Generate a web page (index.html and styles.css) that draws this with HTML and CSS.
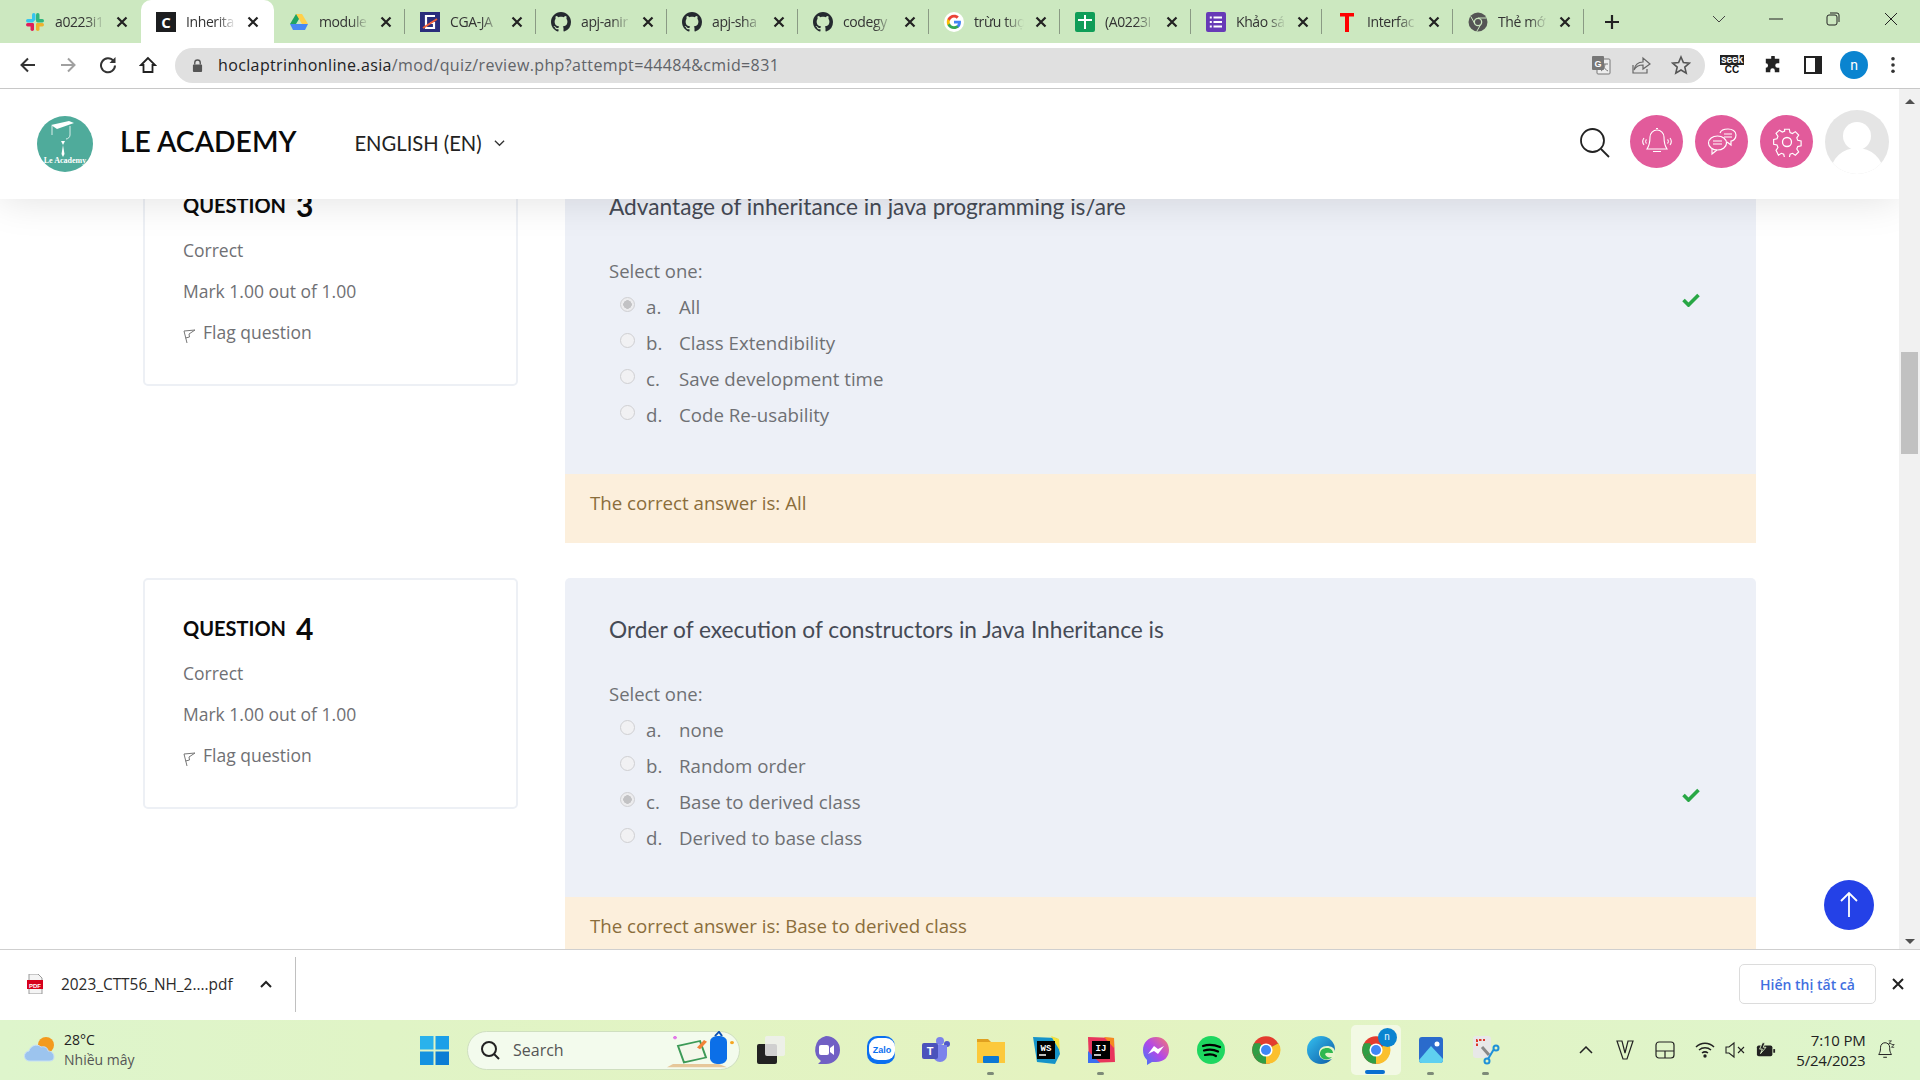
FILE: index.html
```html
<!DOCTYPE html>
<html lang="en">
<head>
<meta charset="utf-8">
<title>LE ACADEMY</title>
<link rel="stylesheet" href="styles.css">
</head>
<body>
<svg class="sprite" aria-hidden="true">
  <symbol id="gh" viewBox="0 0 16 16"><path fill="#24292f" d="M8 0C3.58 0 0 3.58 0 8c0 3.54 2.29 6.53 5.47 7.59.4.07.55-.17.55-.38 0-.19-.01-.82-.01-1.49-2.01.37-2.53-.49-2.69-.94-.09-.23-.48-.94-.82-1.13-.28-.15-.68-.52-.01-.53.63-.01 1.08.58 1.23.82.72 1.21 1.87.87 2.33.66.07-.52.28-.87.51-1.07-1.78-.2-3.64-.89-3.64-3.95 0-.87.31-1.59.82-2.15-.08-.2-.36-1.02.08-2.12 0 0 .67-.21 2.2.82.64-.18 1.32-.27 2-.27.68 0 1.36.09 2 .27 1.53-1.04 2.2-.82 2.2-.82.44 1.1.16 1.92.08 2.12.51.56.82 1.27.82 2.15 0 3.07-1.87 3.75-3.65 3.95.29.25.54.73.54 1.48 0 1.07-.01 1.93-.01 2.2 0 .21.15.46.55.38A8.013 8.013 0 0016 8c0-4.42-3.58-8-8-8z"/></symbol>
  <symbol id="close" viewBox="0 0 12 12"><path d="M1.500 1.500l9 9M10.500 1.500l-9 9" stroke="#222" stroke-width="2.200" fill="none"/></symbol>
  <symbol id="flag" viewBox="0 0 14 16"><path d="M4 15L1 3l11-1-6 4 .5 3-4 1" fill="none" stroke="#777" stroke-width="1"/></symbol>
  <symbol id="check" viewBox="0 0 18 14"><path d="M1.500 7l5 5L16.500 2" fill="none" stroke="#28a745" stroke-width="3.600"/></symbol>
  <symbol id="chrome" viewBox="0 0 48 48"><circle cx="24" cy="24" r="22" fill="#e33b2e"/><path d="M24 24L5 35A22 22 0 0 1 5 13L14 13z" fill="#2f9e44"/><path d="M24 24L5 35A22 22 0 0 0 24 46L44 13z" fill="#2f9e44"/><path d="M24 24L44 13A22 22 0 0 1 24 46z" fill="#fbc02d"/><circle cx="24" cy="24" r="10.500" fill="#fff"/><circle cx="24" cy="24" r="8" fill="#3f86f5"/></symbol>
</svg>

<div class="tabstrip">
  <div class="tab nosep">
    <svg class="fav" viewBox="0 0 20 20"><rect x="7" y="1" width="3.500" height="8" rx="1.700" fill="#36c5f0"/><rect x="1" y="7" width="8" height="3.500" rx="1.700" fill="#36c5f0" /><rect x="11" y="1" width="3.500" height="8" rx="1.700" fill="#2eb67d"/><rect x="11" y="7" width="8" height="3.500" rx="1.700" fill="#2eb67d"/><rect x="1" y="11" width="8" height="3.500" rx="1.700" fill="#e01e5a"/><rect x="5.500" y="11" width="3.500" height="8" rx="1.700" fill="#e01e5a"/><rect x="11" y="11" width="8" height="3.500" rx="1.700" fill="#ecb22e"/><rect x="11" y="11" width="3.500" height="8" rx="1.700" fill="#ecb22e"/></svg>
    <span class="tab-t">a0223i1</span><svg class="x"><use href="#close"/></svg>
  </div>
  <div class="tab active nosep">
    <svg class="fav" viewBox="0 0 20 20"><rect width="20" height="20" fill="#1c1d1f"/><text x="10" y="15.500" text-anchor="middle" class="fav-c">C</text></svg>
    <span class="tab-t">Inherita</span><svg class="x"><use href="#close"/></svg>
  </div>
  <div class="tab">
    <svg class="fav" viewBox="0 0 20 18"><path d="M7 1h6L7 11H1z" fill="#1fa463"/><path d="M13 1l6 10h-6L7 1z" fill="#ffd04b"/><path d="M1 11l3 6h12l3-6z" fill="#4688f4"/></svg>
    <span class="tab-t">module</span><svg class="x"><use href="#close"/></svg>
  </div>
  <div class="tab">
    <svg class="fav" viewBox="0 0 20 20"><rect width="20" height="20" fill="#2a2d7c"/><path d="M15 4H6v12h8v-5h-4" fill="none" stroke="#fff" stroke-width="2.200"/><path d="M3 16L17 7" stroke="#f0603a" stroke-width="2"/></svg>
    <span class="tab-t">CGA-JA</span><svg class="x"><use href="#close"/></svg>
  </div>
  <div class="tab"><svg class="fav"><use href="#gh"/></svg><span class="tab-t">apj-anir</span><svg class="x"><use href="#close"/></svg></div>
  <div class="tab"><svg class="fav"><use href="#gh"/></svg><span class="tab-t">apj-sha</span><svg class="x"><use href="#close"/></svg></div>
  <div class="tab"><svg class="fav"><use href="#gh"/></svg><span class="tab-t">codegy</span><svg class="x"><use href="#close"/></svg></div>
  <div class="tab">
    <svg class="fav" viewBox="0 0 48 48"><circle cx="24" cy="24" r="24" fill="#fff"/><path fill="#4285f4" d="M40.700 24.400c0-1.200-.1-2.300-.3-3.400H24v6.500h9.400c-.4 2.200-1.600 4-3.500 5.200v4.300h5.600c3.300-3 5.200-7.500 5.200-12.600z"/><path fill="#34a853" d="M24 41c4.700 0 8.600-1.600 11.500-4.200l-5.600-4.300c-1.600 1-3.600 1.700-5.900 1.700-4.500 0-8.400-3.100-9.800-7.200H8.400v4.500C11.200 36.200 17.100 41 24 41z"/><path fill="#fbbc05" d="M14.200 27c-.4-1-.6-2.100-.6-3.200s.2-2.200.6-3.200v-4.500H8.400C7.200 18.400 6.600 21 6.600 23.800s.6 5.300 1.800 7.700z"/><path fill="#ea4335" d="M24 13.300c2.500 0 4.800.9 6.600 2.600l4.900-4.900C32.600 8.200 28.700 6.600 24 6.600c-6.900 0-12.800 4.800-15.600 9.900l5.800 4.500c1.400-4.600 5.300-7.700 9.800-7.700z"/></svg>
    <span class="tab-t">trừu tuợ</span><svg class="x"><use href="#close"/></svg>
  </div>
  <div class="tab">
    <svg class="fav" viewBox="0 0 20 20"><rect width="20" height="20" rx="2" fill="#0f9d58"/><path d="M10 3v14M3 8h14" stroke="#fff" stroke-width="2"/></svg>
    <span class="tab-t">(A0223I</span><svg class="x"><use href="#close"/></svg>
  </div>
  <div class="tab">
    <svg class="fav" viewBox="0 0 20 20"><rect width="20" height="20" rx="2" fill="#673ab7"/><path d="M7.500 5.500H16M7.500 10H16M7.500 14.500H16M3.800 5.500h2M3.800 10h2M3.800 14.500h2" stroke="#fff" stroke-width="2"/></svg>
    <span class="tab-t">Khảo sá</span><svg class="x"><use href="#close"/></svg>
  </div>
  <div class="tab">
    <svg class="fav" viewBox="0 0 20 20"><path d="M3 1h14v3.500h-5V20H8V4.500H3z" fill="#f00"/></svg>
    <span class="tab-t">Interfac</span><svg class="x"><use href="#close"/></svg>
  </div>
  <div class="tab">
    <svg class="fav" viewBox="0 0 20 20"><circle cx="10" cy="10" r="9.500" fill="#555"/><path d="M10 6h8.500M7 12L2.800 4.500M13 12l-4.300 7.500" stroke="#cce8c0" stroke-width="1"/><circle cx="10" cy="10" r="4.300" fill="#cce8c0"/><circle cx="10" cy="10" r="3" fill="#555"/></svg>
    <span class="tab-t">Thẻ mớ</span><svg class="x"><use href="#close"/></svg>
  </div>
  <svg class="newtab" viewBox="0 0 16 16"><path d="M8 1v14M1 8h14" stroke="#222" stroke-width="2.200"/></svg>
  <div class="winctl">
    <svg class="wc wc-chev" viewBox="0 0 14 8"><path d="M1 1l6 6 6-6" fill="none" stroke="#444"/></svg>
    <svg class="wc wc-min" viewBox="0 0 14 14"><path d="M0 7h14" stroke="#222"/></svg>
    <svg class="wc wc-max" viewBox="0 0 14 14"><rect x="1" y="3" width="10" height="10" rx="2" fill="none" stroke="#222"/><path d="M4 1h7a2 2 0 0 1 2 2v7" fill="none" stroke="#222"/></svg>
    <svg class="wc wc-close" viewBox="0 0 14 14"><path d="M1 1l12 12M13 1L1 13" stroke="#222"/></svg>
  </div>
</div>

<div class="toolbar">
  <svg class="tb" viewBox="0 0 18 18"><path d="M16 9H3M9 2.500L2.500 9 9 15.500" fill="none" stroke="#333" stroke-width="2"/></svg>
  <svg class="tb" viewBox="0 0 18 18"><path d="M2 9h13M9 2.500L15.500 9 9 15.500" fill="none" stroke="#a0a0a0" stroke-width="2"/></svg>
  <svg class="tb" viewBox="0 0 18 18"><path d="M14.500 5A7 7 0 1 0 16 9.500" fill="none" stroke="#333" stroke-width="2"/><path d="M16.500 1v6h-6z" fill="#333"/></svg>
  <svg class="tb" viewBox="0 0 18 18"><path d="M9 2L2 9h2.500v7h9V9H16z" fill="none" stroke="#222" stroke-width="1.800"/></svg>
  <div class="omni">
    <svg class="lock" viewBox="0 0 12 16"><path d="M3 7V5a3 3 0 0 1 6 0v2" fill="none" stroke="#555" stroke-width="1.500"/><rect x="1" y="7" width="10" height="8" rx="1" fill="#555"/></svg>
    <span class="url"><span class="url-host">hoclaptrinhonline.asia</span>/mod/quiz/review.php?attempt=44484&amp;cmid=831</span>
    <svg class="omni-i" viewBox="0 0 20 20"><rect x="6" y="4" width="13" height="15" rx="1" fill="#eee" stroke="#777"/><rect x="1" y="1" width="12" height="14" rx="1" fill="#777"/><text x="7" y="12" text-anchor="middle" class="gt">G</text><path d="M11 9h6M14 9c0 3-2 6-4 7M12 11c1 2 3 4 5 5" fill="none" stroke="#777"/></svg>
    <svg class="omni-i" viewBox="0 0 20 20"><path d="M2 10v8h14v-4" fill="none" stroke="#666" stroke-width="1.200"/><path d="M3 15c1-6 5-8 9-8V3l7 6-7 5v-4c-4 0-7 1-9 5z" fill="none" stroke="#666" stroke-width="1.200"/></svg>
    <svg class="omni-i" viewBox="0 0 20 20"><path d="M10 2l2.400 5.600 6 .5-4.600 4 1.400 6L10 15l-5.200 3.100 1.400-6-4.600-4 6-.5z" fill="none" stroke="#555" stroke-width="1.600"/></svg>
  </div>
  <div class="seek"><span class="seek-a">seek</span><span class="seek-b">CC</span></div>
  <svg class="tb2" viewBox="0 0 20 20"><path d="M8 1a2 2 0 0 1 4 0v2h5v5h-2a2.500 2.500 0 0 0 0 5h2v5h-5v-2a2.500 2.500 0 0 0-5 0v2H2v-5a2.500 2.500 0 0 0 0-5V3h6z" fill="#222"/></svg>
  <svg class="tb2" viewBox="0 0 18 18"><rect x="1" y="1" width="16" height="16" fill="none" stroke="#222" stroke-width="2"/><rect x="11" y="1" width="6" height="16" fill="#222"/></svg>
  <span class="profile">n</span>
  <svg class="tb2 tb-dots" viewBox="0 0 6 20"><circle cx="3" cy="3" r="2" fill="#333"/><circle cx="3" cy="10" r="2" fill="#333"/><circle cx="3" cy="17" r="2" fill="#333"/></svg>
</div>

<div class="viewport">
  <div class="page">
    <header class="site-head">
      <svg class="logo" viewBox="0 0 56 56"><circle cx="28" cy="28" r="28" fill="#4fab9b"/><path d="M14 9l18-4 5 2-17 6z" fill="#fff"/><path d="M15 10v9M33 10v9c0 2-2 4-4 4" fill="none" stroke="#fff" stroke-width=".8"/><path d="M24 25l2 4 2-4zM26 29l-1.500 9 1.500 3 1.500-3z" fill="#fff"/><text x="28" y="47" text-anchor="middle" class="logo-t">Le Academy</text></svg>
      <div class="brand">LE ACADEMY</div>
      <div class="lang">ENGLISH (EN)<svg class="lang-c" viewBox="0 0 12 8"><path d="M1 1.500l5 5 5-5" fill="none" stroke="#333" stroke-width="1.400"/></svg></div>
      <div class="head-right">
        <svg class="h-search" viewBox="0 0 32 32"><circle cx="13.500" cy="13.500" r="11.500" fill="none" stroke="#222" stroke-width="1.800"/><path d="M22 22l8 8" stroke="#222" stroke-width="1.800"/></svg>
        <span class="pink"><svg viewBox="0 0 30 30"><path d="M15 3a7 7 0 0 0-7 7c0 6-1 9-3 12h20c-2-3-3-6-3-12a7 7 0 0 0-7-7zM11 24.500h8M14 1.500h2M2 11c-1.500 2-1.500 5 0 7M28 11c1.500 2 1.500 5 0 7M4.500 12.500c-1 1-1 3 0 4M25.500 12.500c1 1 1 3 0 4" fill="none" stroke="#fff" stroke-width="1.100"/></svg></span>
        <span class="pink"><svg viewBox="0 0 30 30"><path d="M13 6c1-3 4-4 8-4s8 2 8 6-3 6-5 6v4l-4-3" fill="none" stroke="#fff" stroke-width="1.200"/><ellipse cx="10.500" cy="16" rx="9" ry="7" fill="#e25b9b" stroke="#fff" stroke-width="1.200"/><path d="M5 22v5l5-4M6 14h9M6 17h9M17 7h8M17 10h8" fill="none" stroke="#fff" stroke-width="1.100"/></svg></span>
        <span class="pink"><svg viewBox="0 0 30 30"><circle cx="15" cy="15" r="4.500" fill="none" stroke="#fff" stroke-width="1.300"/><path d="M12.500 2h5l.8 3.500 2.500 1 3-2 3.500 3.500-2 3 1 2.500 3.500.8v5l-3.500.8-1 2.500 2 3-3.500 3.500-3-2-2.500 1-.8 3.500h-5l-.8-3.500-2.500-1-3 2L3.700 24l2-3-1-2.500L1.200 17.700v-5l3.500-.8 1-2.500-2-3L7.200 3l3 2 2.500-1z" fill="none" stroke="#fff" stroke-width="1.200" transform="translate(0.500 0.300) scale(.96)"/></svg></span>
        <svg class="avatar" viewBox="0 0 64 64"><defs><clipPath id="avc"><circle cx="32" cy="32" r="32"/></clipPath></defs><circle cx="32" cy="32" r="32" fill="#e5e5e5"/><g clip-path="url(#avc)"><circle cx="32" cy="26" r="14" fill="#fff"/><ellipse cx="32" cy="62" rx="26" ry="24" fill="#fff"/></g></svg>
      </div>
    </header>

    <section class="qrow">
      <aside class="qinfo">
        <h3 class="qno">Question <span class="qnum">3</span></h3>
        <div class="qmeta">Correct</div>
        <div class="qmeta">Mark 1.00 out of 1.00</div>
        <div class="qmeta qflag"><svg class="flag"><use href="#flag"/></svg>Flag question</div>
      </aside>
      <div class="qmain">
        <div class="formulation">
          <p class="qtext">Advantage of inheritance in java programming is/are</p>
          <p class="prompt">Select one:</p>
          <div class="opt"><span class="radio on"></span><span class="let">a.</span>All<svg class="tick"><use href="#check"/></svg></div>
          <div class="opt"><span class="radio"></span><span class="let">b.</span>Class Extendibility</div>
          <div class="opt"><span class="radio"></span><span class="let">c.</span>Save development time</div>
          <div class="opt"><span class="radio"></span><span class="let">d.</span>Code Re-usability</div>
        </div>
        <div class="feedback">The correct answer is: All</div>
      </div>
    </section>

    <section class="qrow">
      <aside class="qinfo">
        <h3 class="qno">Question <span class="qnum">4</span></h3>
        <div class="qmeta">Correct</div>
        <div class="qmeta">Mark 1.00 out of 1.00</div>
        <div class="qmeta qflag"><svg class="flag"><use href="#flag"/></svg>Flag question</div>
      </aside>
      <div class="qmain">
        <div class="formulation">
          <p class="qtext">Order of execution of constructors in Java Inheritance is</p>
          <p class="prompt">Select one:</p>
          <div class="opt"><span class="radio"></span><span class="let">a.</span>none</div>
          <div class="opt"><span class="radio"></span><span class="let">b.</span>Random order</div>
          <div class="opt"><span class="radio on"></span><span class="let">c.</span>Base to derived class<svg class="tick"><use href="#check"/></svg></div>
          <div class="opt"><span class="radio"></span><span class="let">d.</span>Derived to base class</div>
        </div>
        <div class="feedback">The correct answer is: Base to derived class</div>
      </div>
    </section>

    <span class="totop"><svg viewBox="0 0 20 28"><path d="M10 26V2M2 10l8-8 8 8" fill="none" stroke="#fff" stroke-width="1.800"/></svg></span>
  </div>
  <div class="scrollbar">
    <span class="sb-up"></span>
    <span class="sb-thumb"></span>
    <span class="sb-down"></span>
  </div>
</div>

<div class="downloads">
  <svg class="pdf" viewBox="0 0 16 20"><path d="M2 0h9l4 4v16H2z" fill="#f4f4f4" stroke="#999"/><rect y="6" width="16" height="9" fill="#d6001c"/><text x="8" y="13.500" text-anchor="middle" class="pdf-t">PDF</text></svg>
  <span class="dl-name">2023_CTT56_NH_2....pdf</span>
  <svg class="dl-chev" viewBox="0 0 12 8"><path d="M1 7l5-5 5 5" fill="none" stroke="#222" stroke-width="2"/></svg>
  <span class="dl-sep"></span>
  <button class="dl-all">Hiển thị tất cả</button>
  <svg class="dl-x" viewBox="0 0 12 12"><path d="M1 1l10 10M11 1L1 11" stroke="#222" stroke-width="2"/></svg>
</div>

<footer class="taskbar">
  <div class="weather">
    <svg class="w-ic" viewBox="0 0 32 28"><circle cx="22" cy="9" r="8" fill="#f39a1e"/><path d="M6 25a5 5 0 0 1-1-10c1-5 8-8 12-4 4-1 7 1 7 4 4 0 6 3 6 6s-2 4-5 4z" fill="#9cc4ee" stroke="#c6dff7"/></svg>
    <div class="w-t"><div class="w-a">28°C</div><div class="w-b">Nhiều mây</div></div>
  </div>
  <span class="start"><svg viewBox="0 0 29 29"><rect width="13.500" height="13.500" fill="#2ab2ec"/><rect x="15.500" width="13.500" height="13.500" fill="#1a9fe8"/><rect y="15.500" width="13.500" height="13.500" fill="#1492e0"/><rect x="15.500" y="15.500" width="13.500" height="13.500" fill="#0b7dd4"/></svg></span>
  <div class="search">
    <svg class="s-ic" viewBox="0 0 20 20"><circle cx="9" cy="9" r="7" fill="none" stroke="#222" stroke-width="2"/><path d="M14 14l5 5" stroke="#222" stroke-width="2"/></svg>
    <span class="s-t">Search</span>
    <svg class="s-art" viewBox="0 0 68 46" preserveAspectRatio="none"><path d="M6 8h4M8 6v4" stroke="#e27be8" stroke-width="2"/><path d="M0 44l6-4h46l8 4z" fill="#e6c79a"/><path d="M11 18l22-6 6 20-22 6z" fill="#f4f7ea" stroke="#3d9a57" stroke-width="2"/><path d="M30 20l7-9 3 2-7 9z" fill="#f2843a"/><rect x="43" y="6" width="17" height="34" rx="7" fill="#0b6fe8"/><path d="M48 6l4-5 3 5" fill="none" stroke="#0b4fb0" stroke-width="2"/><circle cx="65" cy="14" r="2" fill="#f5a623"/></svg>
  </div>
  <div class="apps">
    <span class="app"><svg viewBox="0 0 30 30"><rect x="1" y="9" width="20" height="20" rx="2" fill="#222"/><rect x="9" y="1" width="20" height="20" rx="2" fill="#eee" opacity=".85"/></svg></span>
    <span class="app"><svg viewBox="0 0 30 30"><path d="M15 1a14 14 0 0 1 0 28H7l3-3A14 14 0 0 1 15 1z" fill="#7160c4"/><rect x="8" y="10" width="10" height="10" rx="2" fill="#fff"/><path d="M19 13l4-3v10l-4-3z" fill="#fff"/></svg></span>
    <span class="app"><svg viewBox="0 0 30 30"><rect x="1" y="1" width="28" height="28" rx="10" fill="#0a6ff0"/><rect x="3" y="3" width="26" height="22" rx="9" fill="#fff"/><text x="16" y="18" text-anchor="middle" class="zalo">Zalo</text></svg></span>
    <span class="app"><svg viewBox="0 0 30 30"><circle cx="19" cy="6" r="4" fill="#7b83eb"/><circle cx="26" cy="9" r="3" fill="#5059c9"/><path d="M12 10h14v10a7 7 0 0 1-14 0z" fill="#7b83eb"/><rect x="1" y="8" width="16" height="16" rx="2" fill="#4b53bc"/><text x="9" y="20" text-anchor="middle" class="teams">T</text></svg></span>
    <span class="app has-dot"><svg viewBox="0 0 30 30"><path d="M1 4h11l3 3H1z" fill="#e0a020"/><rect x="1" y="7" width="28" height="21" fill="#fcc93c"/><rect x="7" y="21" width="16" height="7" rx="1" fill="#0c78d4"/></svg></span>
    <span class="app"><svg viewBox="0 0 30 30"><path d="M2 2l24 1 3 16-5 10-18-2z" fill="#1593c9"/><path d="M20 1l8 3 1 12z" fill="#f5e33c"/><rect x="6" y="6" width="18" height="18" fill="#000"/><text x="15" y="16" text-anchor="middle" class="jb">WS</text><path d="M8 20h7" stroke="#fff" stroke-width="1.500"/></svg></span>
    <span class="app has-dot"><svg viewBox="0 0 30 30"><path d="M2 2l26 1 1 24-26 1z" fill="#e8355c"/><path d="M18 2l10 1v10z" fill="#f58b1f"/><path d="M2 16v12h12z" fill="#3b6ef0"/><rect x="6" y="6" width="18" height="18" fill="#000"/><text x="15" y="16" text-anchor="middle" class="jb">IJ</text><path d="M8 20h7" stroke="#fff" stroke-width="1.500"/></svg></span>
    <span class="app"><svg viewBox="0 0 30 30"><defs><linearGradient id="msg" x1="0" y1="1" x2="1" y2="0"><stop offset="0" stop-color="#3b7bf6"/><stop offset=".5" stop-color="#b347e8"/><stop offset="1" stop-color="#f77a6c"/></linearGradient></defs><path d="M15 2c8 0 13 6 13 13s-5 12-13 12h-4l-5 3v-5C3 22 2 19 2 15 2 8 7 2 15 2z" fill="url(#msg)"/><path d="M7 19l6-8 4 3 6-3-6 8-4-3z" fill="#fff"/></svg></span>
    <span class="app"><svg viewBox="0 0 30 30"><circle cx="15" cy="15" r="14" fill="#1ed760"/><path d="M7 11c6-2 12-1 17 1M8 15.500c5-1.500 10-1 14 1M9 20c4-1 8-1 11 1" fill="none" stroke="#000" stroke-width="2.200" stroke-linecap="round"/></svg></span>
    <span class="app"><svg><use href="#chrome"/></svg></span>
    <span class="app"><svg viewBox="0 0 30 30"><defs><linearGradient id="edg" x1="0" y1="0" x2="1" y2="1"><stop offset="0" stop-color="#35c1f1"/><stop offset="1" stop-color="#0c59a4"/></linearGradient></defs><circle cx="15" cy="15" r="14" fill="url(#edg)"/><path d="M29 17c0-4-4-6-8-6-5 0-8 3-8 7 0 4 3 7 8 7 3 0 6-1 8-3z" fill="#e6f5cb"/><path d="M14 19c0-4 3-6 7-6 3 0 6 2 6 5-3 0-7-1-8 1 1 3 4 4 7 3-3 4-12 3-12-3z" fill="#2fb84f"/></svg></span>
    <span class="app active-app"><svg><use href="#chrome"/></svg><span class="ch-badge">n</span></span>
    <span class="app has-dot"><svg viewBox="0 0 30 30"><rect x="3" y="2" width="24" height="26" rx="3" fill="#2a6bcc"/><path d="M3 25l12-14 12 13v1a3 3 0 0 1-3 3H6a3 3 0 0 1-3-3z" fill="#5fd0f0"/><circle cx="21" cy="9" r="2.500" fill="#fff"/></svg></span>
    <span class="app has-dot"><svg viewBox="0 0 30 30"><rect x="2" y="1" width="18" height="22" rx="3" fill="#e8e8e8"/><path d="M6 11V5h8" fill="none" stroke="#e0382a" stroke-width="2" stroke-dasharray="2.500 1.500"/><path d="M11 12l7 8" stroke="#888" stroke-width="3"/><circle cx="25" cy="13" r="2.500" fill="none" stroke="#1e90d8" stroke-width="2"/><circle cx="16" cy="26" r="2.500" fill="none" stroke="#1e90d8" stroke-width="2"/><path d="M23 14l-6 10" stroke="#1e90d8" stroke-width="2"/></svg></span>
  </div>
  <div class="tray">
    <svg class="tr tr-caret" viewBox="0 0 14 8"><path d="M1 7l6-6 6 6" fill="none" stroke="#222" stroke-width="1.500"/></svg>
    <svg class="tr tr-v" viewBox="0 0 18 20"><path d="M1 1h5l3 12 3-12h5L11 19H7z" fill="none" stroke="#222" stroke-width="1.200"/></svg>
    <svg class="tr tr-t" viewBox="0 0 20 20"><rect x="1" y="2" width="18" height="16" rx="3" fill="none" stroke="#222" stroke-width="1.200"/><path d="M1 11h18M10 11v7" stroke="#222" stroke-width="1.200"/></svg>
    <svg class="tr tr-w" viewBox="0 0 20 18"><path d="M1 6c5-5 13-5 18 0M4 9c3.500-3 8.500-3 12 0M7 12c2-1.500 4-1.500 6 0" fill="none" stroke="#222" stroke-width="1.500"/><circle cx="10" cy="15" r="1.700" fill="#222"/></svg>
    <svg class="tr tr-s" viewBox="0 0 20 18"><path d="M1 6h3l5-4v14l-5-4H1z" fill="none" stroke="#222" stroke-width="1.100"/><path d="M13 6l6 6M19 6l-6 6" stroke="#222" stroke-width="1.100"/></svg>
    <svg class="tr tr-b" viewBox="0 0 22 18"><rect x="1" y="4" width="17" height="12" rx="2" fill="#222"/><rect x="19" y="8" width="2" height="4" fill="#222"/><path d="M7 1L4 8h3L5 13l6-7H8l2-5z" fill="#222" stroke="#e0f3cb"/></svg>
    <div class="clock"><div>7:10 PM</div><div>5/24/2023</div></div>
    <svg class="tr tr-n" viewBox="0 0 20 22"><path d="M9 3a5 5 0 0 0-5 5c0 5-1 6-2 8h14c-1-2-2-3-2-8a5 5 0 0 0-5-5zM7 19h4" fill="none" stroke="#222" stroke-width="1.100"/><path d="M13 1h3l-3 3h3M16 5h3l-3 3h3" fill="none" stroke="#222" stroke-width=".9"/></svg>
  </div>
</footer>
</body>
</html>
```

FILE: styles.css
```css
* { box-sizing: border-box; }
html, body { margin: 0; height: 100%; overflow: hidden; }
body {
  display: flex;
  flex-direction: column;
  height: 1080px;
  font-family: "Open Sans", "Noto Sans", sans-serif;
  background: #fff;
}
.sprite { display: block; width: 0; height: 0; }

/* tab strip */
.tabstrip {
  height: 43px;
  background: #cce8c0;
  display: flex;
  align-items: stretch;
  padding-left: 10px;
  flex: none;
}
.tab {
  width: 131px;
  display: flex;
  align-items: center;
  padding-left: 15px;
  position: relative;
}
.tab:not(.nosep)::after {
  content: "";
  width: 1px;
  height: 25px;
  background: #8a9a84;
  margin-left: 12px;
}
.tab.active {
  width: 133px;
  background: #fff;
  border-radius: 10px 10px 0 0;
}
.fav { width: 20px; height: 20px; flex: none; }
.tab-t {
  width: 50px;
  margin: -1px 0 0 10px;
  font: 14px "Open Sans", sans-serif;
  letter-spacing: -.4px;
  color: #333;
  white-space: nowrap;
  -webkit-mask-image: linear-gradient(90deg, #000 62%, transparent);
  mask-image: linear-gradient(90deg, #000 62%, transparent);
}
.x { width: 12px; height: 12px; margin-left: 11px; flex: none; }
.fav-c { font: 700 15px "Open Sans", sans-serif; fill: #fff; }
.newtab { width: 16px; height: 16px; align-self: center; margin-left: 20px; flex: none; }
.winctl { display: flex; align-items: center; margin-left: 92px; height: 38px; }
.wc { width: 14px; height: 14px; flex: none; }
.wc-chev { margin-right: 43px; }
.wc-min { margin-right: 43px; }
.wc-max { margin-right: 44px; }

/* toolbar */
.toolbar {
  height: 46px;
  flex: none;
  display: flex;
  align-items: center;
  border-bottom: 1px solid #c8c8c8;
  padding: 0 0 1px 19px;
}
.tb { width: 18px; height: 18px; flex: none; margin-right: 22px; }
.omni {
  width: 1530px;
  height: 35px;
  margin-left: -4px;
  border-radius: 18px;
  background: #e0e0e0;
  display: flex;
  align-items: center;
  padding-left: 17px;
  flex: none;
}
.lock { width: 11px; height: 15px; flex: none; }
.url {
  margin-left: 15px;
  font: 16px "Open Sans", sans-serif;
  letter-spacing: .37px;
  color: #5f6368;
  white-space: nowrap;
  flex: 1;
}
.url-host { color: #202124; }
.omni-i { width: 20px; height: 20px; flex: none; margin-right: 20px; }
.omni-i:last-child { margin-right: 14px; }
.gt { font: 700 9px "Liberation Sans", sans-serif; fill: #fff; }
.seek {
  width: 20px;
  margin-left: 17px;
  display: flex;
  flex-direction: column;
  align-items: center;
  flex: none;
  font-family: "Liberation Sans", sans-serif;
  font-weight: 700;
  line-height: 10px;
}
.seek-a { background: #222; color: #fff; font-size: 10px; padding: 0 1px; }
.seek-b { color: #111; font-size: 10px; }
.tb2 { height: 18px; width: 18px; flex: none; margin-left: 22px; }
.tb-dots { margin-left: 16px; }
.profile {
  width: 28px;
  height: 28px;
  margin-left: 18px;
  border-radius: 50%;
  background: #0a84d0;
  color: #fff;
  font: 14px/28px Roboto, sans-serif;
  text-align: center;
  flex: none;
}

/* viewport */
.viewport { flex: 1; display: flex; min-height: 0; }
.page {
  flex: 1;
  min-width: 0;
  position: relative;
  overflow: hidden;
  padding: 66px 143px 0;
  display: flex;
  flex-direction: column;
  gap: 35px;
  color: #6f7074;
}
.site-head {
  position: absolute;
  top: 0;
  left: 0;
  right: 0;
  height: 110px;
  background: #fff;
  box-shadow: 0 0 40px rgba(0, 0, 0, .13);
  display: flex;
  align-items: center;
  padding: 0 10px 0 37px;
  z-index: 2;
}
.logo { width: 56px; height: 56px; flex: none; }
.logo-t { font: 700 8px "Liberation Serif", serif; fill: #fff; }
.brand {
  margin: -6px 0 0 27px;
  font: 600 28.300px/1 Lato, sans-serif;
  color: #0a0a0a;
  white-space: nowrap;
}
.lang {
  margin: -2px 0 0 58px;
  display: flex;
  align-items: center;
  font: 400 20.200px Lato, sans-serif;
  color: #222;
  white-space: nowrap;
}
.lang-c { width: 11px; height: 8px; margin-left: 12px; }
.head-right { margin: -5px 0 0 auto; display: flex; align-items: center; }
.h-search { width: 32px; height: 32px; margin: 2px 19px 0 0; flex: none; }
.pink {
  width: 53px;
  height: 53px;
  border-radius: 50%;
  background: #e25b9b;
  margin-right: 12px;
  display: flex;
  align-items: center;
  justify-content: center;
  flex: none;
}
.pink svg { width: 30px; height: 30px; }
.avatar { width: 64px; height: 64px; flex: none; }

/* questions */
.qrow { display: flex; gap: 47px; align-items: flex-start; flex: none; }
.qinfo {
  width: 375px;
  height: 231px;
  flex: none;
  border: 2px solid #edf0f5;
  border-radius: 5px;
  padding: 30px 38px 0;
  background: #fff;
}
.qno {
  margin: 0 0 6.500px;
  font: 700 20px/36px Lato, sans-serif;
  text-transform: uppercase;
  color: #0a0a0a;
  display: flex;
  align-items: center;
  gap: 10px;
}
.qnum { font-size: 30px; font-weight: 700; }
.qmeta { font-size: 17.500px; line-height: 41px; white-space: nowrap; }
.qflag { display: flex; align-items: center; }
.flag { width: 14px; height: 16px; margin: 8px 6px 0 0; flex: none; }
.qmain { width: 1191px; flex: none; }
.formulation {
  background: #edf0f7;
  padding: 38px 45px 42px 44px;
  height: 319px;
  border-radius: 5px 5px 0 0;
}
.qtext { margin: 0; font: 400 22.700px/28px Lato, sans-serif; color: #454a55; white-space: nowrap; }
.prompt { margin: 37px 0 4px 0; font-size: 18.500px; line-height: 26px; }
.opt {
  height: 36px;
  display: flex;
  align-items: center;
  font-size: 18.700px;
  padding-left: 11px;
  padding-right: 11px;
  white-space: nowrap;
}
.radio {
  width: 15px;
  height: 15px;
  border-radius: 50%;
  border: 1px solid #cfcfd2;
  background: #f1f1f3;
  margin: -4px 11px 0 0;
  flex: none;
}
.radio.on { background: radial-gradient(circle, #c2c2c4 0 4px, #ececee 4.500px); }
.let { width: 33px; flex: none; }
.tick { width: 18px; height: 14px; margin: -12px 0 0 auto; flex: none; }
.feedback {
  background: #fcefdc;
  height: 69px;
  padding: 16px 25px 0;
  font-size: 18.700px;
  line-height: 26px;
  color: #8a6d3b;
}
.totop {
  position: absolute;
  right: 25px;
  bottom: 19px;
  width: 50px;
  height: 50px;
  border-radius: 50%;
  background: #2441e7;
  display: flex;
  align-items: center;
  justify-content: center;
  z-index: 3;
}
.totop svg { width: 20px; height: 28px; }

/* scrollbar */
.scrollbar {
  width: 21px;
  flex: none;
  background: #f1f1f1;
  display: flex;
  flex-direction: column;
  align-items: center;
  padding: 10px 0 5px;
}
.sb-up { border: 5px solid transparent; border-top: 0; border-bottom: 5px solid #505050; }
.sb-thumb { width: 17px; height: 102px; background: #c1c1c1; margin-top: 248px; }
.sb-down { border: 5px solid transparent; border-bottom: 0; border-top: 5px solid #505050; margin-top: auto; }

/* downloads */
.downloads {
  height: 71px;
  flex: none;
  display: flex;
  align-items: center;
  border-top: 1px solid #cfcfcf;
  background: #fff;
  padding: 0 16px 2px 27px;
}
.pdf { width: 16px; height: 20px; flex: none; }
.pdf-t { font: 700 6px "Liberation Sans", sans-serif; fill: #fff; }
.dl-name { margin-left: 18px; width: 188px; font-size: 15.400px; color: #2b2b2b; white-space: nowrap; }
.dl-chev { width: 12px; height: 8px; margin-left: 11px; flex: none; }
.dl-sep { width: 1px; height: 55px; background: #c0c0c0; margin-left: 23px; flex: none; }
.dl-all {
  margin-left: auto;
  width: 137px;
  height: 40px;
  border: 1px solid #dcdcdc;
  border-radius: 5px;
  background: #fff;
  color: #3f6fe0;
  font: 600 14px "Open Sans", sans-serif;
  padding: 0;
}
.dl-x { width: 12px; height: 12px; margin-left: 16px; flex: none; }

/* taskbar */
.taskbar {
  height: 60px;
  flex: none;
  display: flex;
  align-items: center;
  background: linear-gradient(90deg, #def5cc 0%, #e0f4c6 20%, #e4f3c0 55%, #def5cc 100%);
}
.weather { width: 412px; display: flex; align-items: center; padding-left: 24px; flex: none; }
.w-ic { width: 32px; height: 28px; flex: none; }
.w-t { margin-left: 8px; font-size: 14px; line-height: 20px; }
.w-a { color: #222; }
.w-b { color: #555; }
.start { width: 44px; display: flex; justify-content: center; flex: none; }
.start svg { width: 29px; height: 29px; }
.search {
  width: 273px;
  height: 39px;
  margin-left: 11px;
  border-radius: 20px;
  background: #f3fbed;
  border: 1px solid #cfdfc0;
  display: flex;
  align-items: center;
  padding-left: 12px;
  flex: none;
}
.s-ic { width: 20px; height: 20px; flex: none; }
.s-t { margin-left: 13px; font-size: 16px; color: #555; }
.s-art { width: 68px; height: 38px; margin-left: auto; margin-right: 4px; flex: none; }
.apps { display: flex; margin-left: 3px; flex: none; }
.app {
  width: 55px;
  height: 50px;
  display: flex;
  align-items: center;
  justify-content: center;
  position: relative;
  flex: none;
}
.app svg { width: 30px; height: 30px; }
.has-dot::after {
  content: "";
  position: absolute;
  bottom: 0;
  left: 24px;
  width: 7px;
  height: 3px;
  border-radius: 2px;
  background: #7d8a78;
}
.active-app { background: #f2f9e4; border-radius: 5px; width: 50px; margin: 0 2.500px; }
.active-app::after {
  content: "";
  position: absolute;
  bottom: 1px;
  left: 14px;
  width: 20px;
  height: 4px;
  border-radius: 2px;
  background: #0a6fd0;
}
.ch-badge {
  position: absolute;
  top: 3px;
  right: 4px;
  width: 19px;
  height: 19px;
  border-radius: 50%;
  background: #0a84d0;
  color: #e8f4ff;
  font: 10px/18px Roboto, sans-serif;
  text-align: center;
}
.tray { flex: 1; display: flex; align-items: center; padding-left: 65.500px; }
.tr { flex: none; height: 20px; width: 20px; margin-right: 20px; }
.tr-caret { width: 14px; height: 8px; margin-right: 22px; }
.tr-v { margin-right: 20px; }
.tr-w { margin-right: 10px; }
.tr-s { margin-right: 11px; }
.tr-b { margin-right: 0; }
.clock {
  width: 90px;
  flex: none;
  text-align: right;
  font-size: 15px;
  line-height: 20px;
  color: #222;
  letter-spacing: -.2px;
}
.tr-n { margin: 0 0 0 10px; }
.zalo { font: 700 9px "Liberation Sans", sans-serif; fill: #0a6ff0; }
.teams { font: 700 11px "Liberation Sans", sans-serif; fill: #fff; }
.jb { font: 700 9px "Liberation Mono", monospace; fill: #fff; }
```
